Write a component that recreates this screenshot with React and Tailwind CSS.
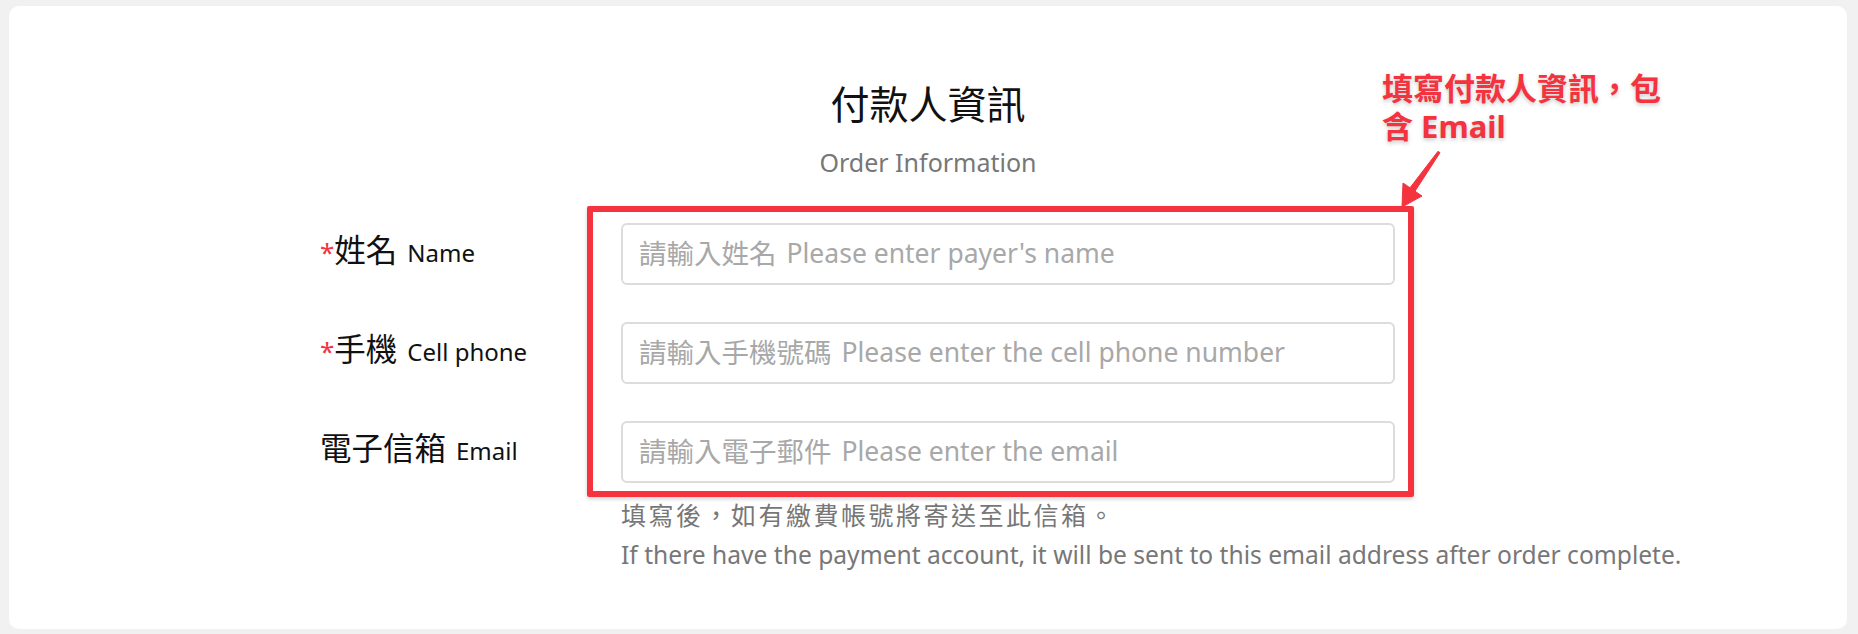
import { useState } from 'react'

const RED = 'text-[#f4333f]'

const fields = [
  { key: 'name', zh: '姓名', en: 'Name', required: true, hintZh: '請輸入姓名', hintEn: "Please enter payer's name" },
  { key: 'phone', zh: '手機', en: 'Cell phone', required: true, hintZh: '請輸入手機號碼', hintEn: 'Please enter the cell phone number' },
  { key: 'email', zh: '電子信箱', en: 'Email', required: false, hintZh: '請輸入電子郵件', hintEn: 'Please enter the email' },
]

const FieldRow = ({ field, value, onChange }) => (
  <div className="flex items-center">
    <label className="w-[301px] -mt-[8px] flex items-baseline text-[#111]">
      {field.required && <span className={`${RED} text-[26px] leading-none`}>*</span>}
      <span className="text-[31.5px] leading-none">{field.zh}</span>
      <span className="ml-[10px] text-[24px] leading-none">{field.en}</span>
    </label>
    <div className="relative w-[774px] h-[62px]">
      <input
        value={value}
        onChange={onChange}
        aria-label={`${field.hintZh} ${field.hintEn}`}
        className="w-full h-full rounded-[6px] border-2 border-[#dcdcdc] bg-white px-[16px] text-[24px] text-[#333] outline-none"
      />
      {!value && (
        <span className="absolute left-[18px] inset-y-0 flex items-center gap-[10px] text-[#a8a8a8] pointer-events-none">
          <span className="text-[27.5px]">{field.hintZh}</span>
          <span className="text-[26.5px]">{field.hintEn}</span>
        </span>
      )}
    </div>
  </div>
)

// red annotation laid over the form
const Annotation = () => (
  <>
    <div className="absolute left-[578px] top-[200px] w-[827px] h-[291px] border-[6px] border-[#f4333f] rounded-[2px] shadow-[0_2px_4px_rgba(0,0,0,0.18)] pointer-events-none" />
    <svg className="absolute left-[1371px] top-[134px] w-[70px] h-[80px]" viewBox="0 0 70 80">
      <polygon
        points="58,11.3 30,47.8 23,43 22,67 42,56 35,51.2 60,12.7"
        fill="#f4333f"
        stroke="#f4333f"
        strokeWidth="1"
        strokeLinejoin="round"
      />
    </svg>
    <div className={`absolute left-[1373px] top-[63px] w-[300px] ${RED} font-bold text-[31px] leading-[38px] [text-shadow:0_2px_4px_rgba(0,0,0,0.22)]`}>
      填寫付款人資訊，包
      <br />
      含 Email
    </div>
  </>
)

export default function App() {
  const [form, setForm] = useState({ name: '', phone: '', email: '' })

  const handleChange = (key) => (e) => setForm((prev) => ({ ...prev, [key]: e.target.value }))

  return (
    <div className="min-h-[634px] bg-[#f1f1f1] pt-[6px] pl-[9px] pr-[11px] pb-[5px] font-['Noto_Sans','Noto_Sans_CJK_TC',sans-serif]">
      <div className="relative h-[623px] rounded-[10px] bg-white pt-[74px]">
        <h1 className="text-center text-[39px] leading-[48px] font-normal text-[#111]">付款人資訊</h1>
        <p className="mt-[19px] text-center text-[25px] leading-[30px] text-[#777]">Order Information</p>

        <div className="mt-[46px] pl-[311px] flex flex-col gap-[37px]">
          {fields.map((f) => (
            <FieldRow key={f.key} field={f} value={form[f.key]} onChange={handleChange(f.key)} />
          ))}
        </div>

        <div className="pl-[612px] mt-[14px] text-[#777]">
          <p className="text-[25px] leading-[36px] tracking-[2.5px]">填寫後，如有繳費帳號將寄送至此信箱。</p>
          <p className="mt-[6px] text-[24.6px] leading-[32px]">
            If there have the payment account, it will be sent to this email address after order complete.
          </p>
        </div>

        <Annotation />
      </div>
    </div>
  )
}
